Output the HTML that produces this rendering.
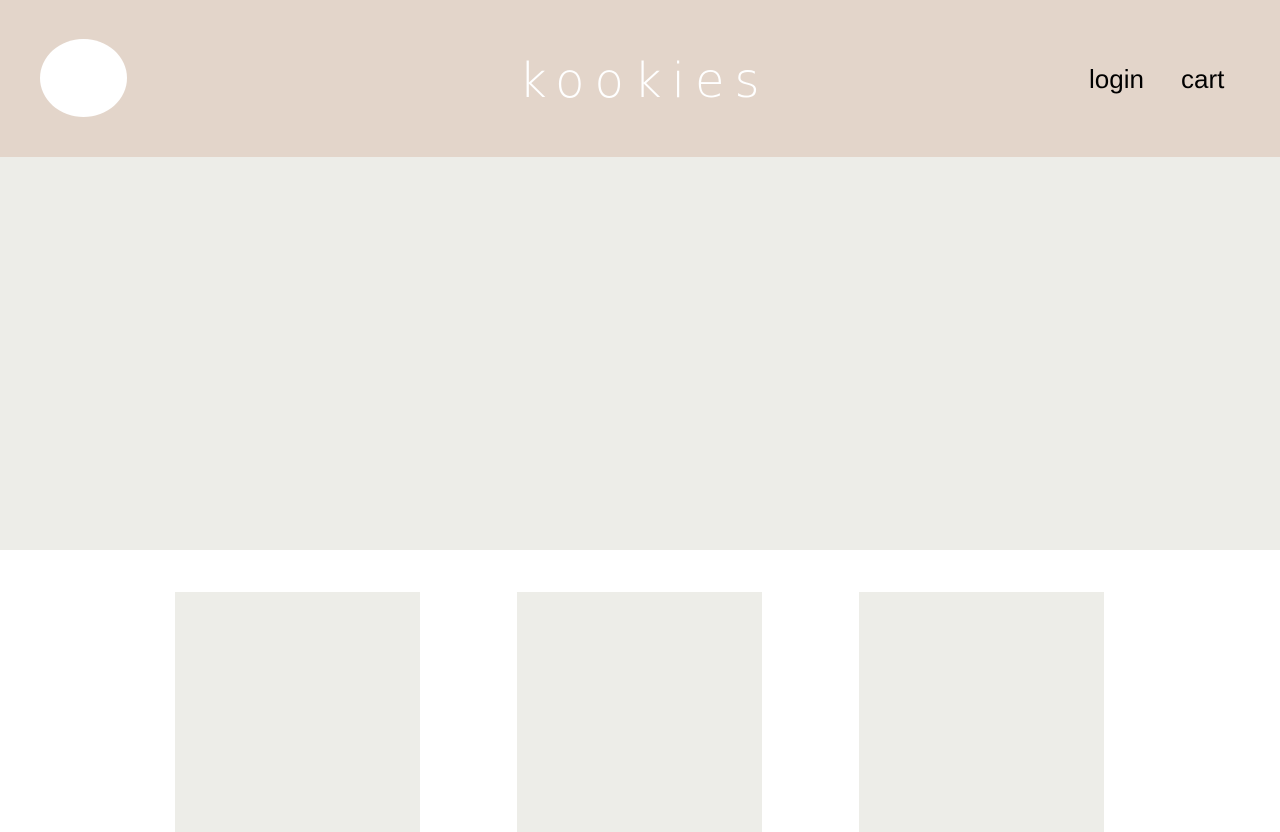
<!DOCTYPE html>
<html><head><meta charset="utf-8"><style>
html,body{margin:0;padding:0;width:1280px;height:832px;overflow:hidden;background:#fff;font-family:"Liberation Sans",sans-serif}
.hdr{position:absolute;left:0;top:0;width:1280px;height:157px;background:#e3d5ca}
.logo{position:absolute;left:40px;top:39px;width:87px;height:78px;border-radius:50%;background:#fff}
.title{position:absolute;left:519px;top:51px;font-size:48px;color:#fff;letter-spacing:10px;line-height:60px;font-family:"DejaVu Sans","Liberation Sans",sans-serif;font-weight:200}
.nav{position:absolute;top:62px;font-size:26px;color:#000;line-height:34px}
.hero{position:absolute;left:0;top:157px;width:1280px;height:393px;background:#edede8}
.card{position:absolute;top:592px;width:245px;height:240px;background:#edede8}
</style></head><body>
<div class="hdr">
<div class="logo"></div>
<div class="title">kookies</div>
<div class="nav" style="left:1089px">login</div>
<div class="nav" style="left:1181px">cart</div>
</div>
<div class="hero"></div>
<div class="card" style="left:175px"></div>
<div class="card" style="left:517px"></div>
<div class="card" style="left:859px"></div>
</body></html>
